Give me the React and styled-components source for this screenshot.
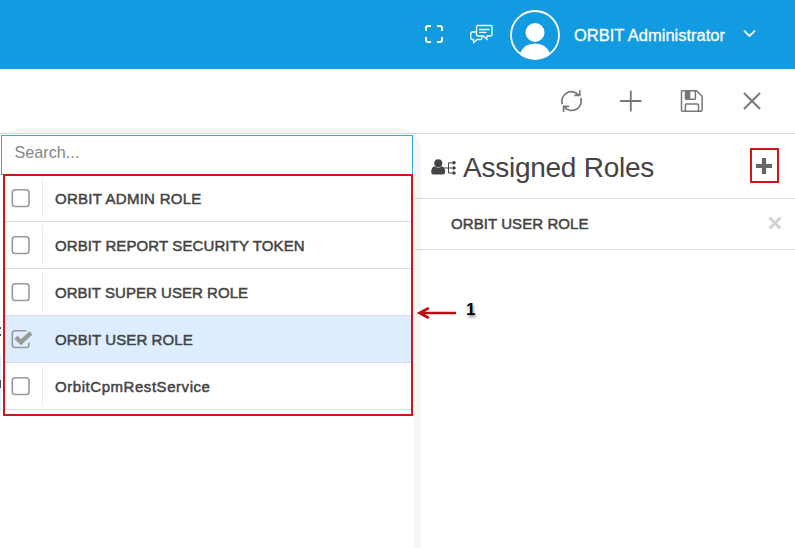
import React from "react";
import styled, { createGlobalStyle, css } from "styled-components";

const Global = createGlobalStyle`
  * { box-sizing: border-box; }
  html, body { margin: 0; padding: 0; background: #fff; overflow: hidden; }
  body { font-family: "Liberation Sans", Arial, sans-serif; color: #444; }
`;

const Page = styled.div`
  position: relative;
  width: 795px;
  height: 548px;
  display: flex;
  flex-direction: column;
  overflow: hidden;
  background: #fff;
`;
const TopBar = styled.header`
  flex: none;
  height: 69px;
  padding: 1px 39px 0 0;
  display: flex;
  justify-content: flex-end;
  align-items: center;
  background: #129be0;
  color: #fff;
`;
const UserName = styled.span`
  width: 151px;
  margin: 0 18px 0 14px;
  font-size: 16.5px;
  line-height: 20px;
  white-space: nowrap;
  -webkit-text-stroke: 0.3px #fff;
`;
const Icon = styled.svg`
  flex: none;
  display: block;
  overflow: visible;
  margin-right: ${(p) => p.$gap || 0}px;
`;
const Toolbar = styled.nav`
  position: relative;
  flex: none;
  height: 65px;
  padding: 0 32px 1px 0;
  display: flex;
  justify-content: flex-end;
  align-items: center;
  border-bottom: 1px solid #dadae2;
`;
const Halo = styled.div`
  position: absolute;
  left: 0;
  top: 128px;
  width: 421px;
  height: 440px;
  border-radius: 22px;
  background: #f6f6f6;
`;
const Body = styled.main`
  position: relative;
  flex: 1;
  display: flex;
  border-top: 1px solid #dadae2;
  margin-top: -1px;
`;
const Sliver = styled.div`
  width: 1px;
  background: #fff;
  padding-top: 193px;
  overflow: hidden;
`;
const Mark = styled.i`
  display: block;
  height: ${(p) => p.$h}px;
  margin-bottom: ${(p) => p.$gap}px;
  background: ${(p) => p.$color};
`;
const Available = styled.section`
  width: 413px;
  display: flex;
  flex-direction: column;
  padding-top: 1px;
  background: #fff;
`;
const Search = styled.input`
  width: 412px;
  height: 40px;
  border: 1px solid #38a9e0;
  border-radius: 0;
  outline: 0;
  padding: 0 12.5px 5px;
  font: 16.2px/20px "Liberation Sans", Arial, sans-serif;
  color: #777;
  background: #fff;
  &::placeholder { color: #858585; opacity: 1; }
`;
const RoleRow = styled.div`
  height: 47px;
  width: 408px;
  margin-left: 3px;
  display: flex;
  align-items: center;
  border-bottom: 1px solid #dadce2;
  background: ${(p) => (p.$selected ? "#dceeff" : "#fff")};
`;
const CheckCell = styled.div`
  width: 39px;
  height: 40px;
  padding-left: 6px;
  display: flex;
  align-items: center;
  border-right: 1px solid #e9e9eb;
`;
const RoleName = styled.span`
  font-size: 15px;
  line-height: 20px;
  white-space: nowrap;
  color: #444;
  -webkit-text-stroke: 0.5px #444;
  letter-spacing: ${(p) => p.$spacing || 0}px;
  margin: 1px 0 0 12px;
`;
const Assigned = styled.section`
  flex: 1;
`;
const PanelHeader = styled.div`
  height: 65px;
  padding: 2px 23px 0 17px;
  display: flex;
  align-items: center;
  border-bottom: 1px solid #dadae2;
`;
const Title = styled.h1`
  flex: 1;
  margin: 2px 0 0;
  font-size: 28px;
  line-height: 34px;
  font-weight: 400;
  letter-spacing: -0.25px;
  color: #444;
`;
const AddIcon = styled(Icon)`
  margin-top: -3px;
`;
const AssignedRow = styled.div`
  height: 51px;
  padding: 0 13px 2px 25px;
  display: flex;
  align-items: center;
  justify-content: space-between;
  border-bottom: 1px solid #dcdcdf;
`;
const outline = css`
  position: absolute;
  border: 2px solid #d3151b;
  pointer-events: none;
`;
const ListOutline = styled.div`
  ${outline}
  left: 3px; top: 174px; width: 410px; height: 242px;
`;
const AddOutline = styled.div`
  ${outline}
  left: 750px; top: 148px; width: 29px; height: 35px;
`;
const Callout = styled.div`
  position: absolute;
  left: 417px;
  top: 302px;
  display: flex;
  align-items: center;
  height: 20px;
`;
const Step = styled.b`
  margin: -4px 0 0 9px;
  font-size: 17px;
  color: #000;
  text-shadow: 1px 2px 3px rgba(0, 0, 0, 0.5);
`;

const roles = [
  ["ORBIT ADMIN ROLE", 0.27],
  ["ORBIT REPORT SECURITY TOKEN", 0.11],
  ["ORBIT SUPER USER ROLE", 0.04],
  ["ORBIT USER ROLE", 0.09, true],
  ["OrbitCpmRestService", 0.55],
];

const Checkbox = ({ checked }) => (
  <Icon width="24" height="20" fill="none" stroke="#999" strokeWidth="1.6">
    {checked ? (
      <>
        <path d="M16.5 1.8H5.1Q2.3 1.8 2.3 4.6V15.7Q2.3 18.5 5.1 18.5H16.2Q19 18.5 19 15.7V13.5" />
        <path d="M6 8.2L11 13.2L21 3.8" strokeWidth="4.4" />
      </>
    ) : (
      <rect x="2.3" y="1.8" width="16.7" height="16.7" rx="2.8" />
    )}
  </Icon>
);

export default function App() {
  return (
    <Page>
      <Global />
      <TopBar>
        <Icon $gap={27} width="18" height="18" fill="none" stroke="#fff" strokeWidth="2" viewBox="0 1 18 18">
          <path d="M1 6V3Q1 1 3 1H6M12 1H15Q17 1 17 3V6M17 12V15Q17 17 15 17H12M6 17H3Q1 17 1 15V12" />
        </Icon>
        <Icon $gap={17} width="23" height="19" viewBox="0 1.5 23 19" fill="none" stroke="#fff" strokeWidth="1.3" strokeLinejoin="round">
          <path d="M8 1H20.5Q22 1 22 2.5V10Q22 11.5 20.5 11.5H17V15L13.5 11.5H8Q6.5 11.5 6.5 10V2.5Q6.5 1 8 1Z" />
          <path d="M9.2 5H19.5M9.2 7.8H16.5" />
          <path d="M6.5 7.5H2.3Q.8 7.5.8 9V13.5Q.8 15 2.3 15H3.5V18.2L7 15H11Q12 15 12 13.5V12" />
        </Icon>
        <Icon width="50" height="50" viewBox="0 0 50 50">
          <defs><clipPath id="avatar"><circle cx="25" cy="25" r="24" /></clipPath></defs>
          <g fill="#fff" clipPath="url(#avatar)">
            <circle cx="25" cy="22.4" r="9.5" />
            <path d="M9.5 50V44Q14 33.6 25 33.6T40.5 44V50Z" />
          </g>
          <circle cx="25" cy="25" r="24" fill="none" stroke="#fff" strokeWidth="1.8" />
        </Icon>
        <UserName>ORBIT Administrator</UserName>
        <Icon width="13" height="8" viewBox="0 1.5 13 8" fill="none" stroke="#fff" strokeWidth="1.8">
          <path d="M1 1.2L6.5 6.5L12 1.2" />
        </Icon>
      </TopBar>

      <Halo />
      <Toolbar>
        <Icon $gap={37} width="22" height="22" viewBox="-1 0 22 22" fill="none" stroke="#777" strokeWidth="1.7">
          <path d="M1.3 14.2A9.5 9.5 0 0 1 17.6 5.1M18.8 .2V5.4H13.3" />
          <path d="M19.7 7.8A9.5 9.5 0 0 1 3.4 17M2.6 22V16.4H8.1" />
        </Icon>
        <Icon $gap={39} width="22" height="22" viewBox="-.8 0 22 22" fill="none" stroke="#777" strokeWidth="1.8">
          <path d="M11 .5V21.5M.3 11H21.7" />
        </Icon>
        <Icon $gap={39} width="22" height="22" viewBox="-.8 0 22 22" fill="none" stroke="#777" strokeWidth="1.5">
          <path d="M1.7 .8H15.8L21.3 6.3V20.3Q21.3 21.3 20.3 21.3H1.7Q.7 21.3.7 20.3V1.8Q.7.8 1.7.8Z" />
          <path d="M4.7 1V8.4Q4.7 9.3 5.7 9.3H13.6Q14.6 9.3 14.6 8.4V1M4.6 21V15Q4.6 14 5.6 14H16.7Q17.7 14 17.7 15V21" />
          <path d="M4.7 1H9.5V9.2H4.7Z" fill="#777" stroke="none" />
        </Icon>
        <Icon width="22" height="22" viewBox="0 0 22 22" fill="none" stroke="#777" strokeWidth="2">
          <path d="M3 3L19 19M19 3L3 19" />
        </Icon>
      </Toolbar>

      <Body>
        <Sliver>
          <Mark $h={2} $gap={5} $color="#444" />
          <Mark $h={2} $gap={19} $color="#444" />
          <Mark $h={25} $gap={0} $color="#dceeff" />
          <Mark $h={8} $gap={0} $color="#555" />
          <Mark $h={23} $gap={0} $color="#dceeff" />
        </Sliver>
        <Available>
          <Search placeholder="Search..." aria-label="Search" />
          {roles.map(([name, spacing, checked]) => (
            <RoleRow key={name} $selected={checked}>
              <CheckCell><Checkbox checked={checked} /></CheckCell>
              <RoleName $spacing={spacing}>{name}</RoleName>
            </RoleRow>
          ))}
        </Available>
        <Assigned>
          <PanelHeader>
            <Icon $gap={7} width="25" height="17" viewBox="0 0 25 17" fill="#444">
              <circle cx="7.3" cy="4.3" r="4" />
              <path d="M3.5 7.3Q7.3 10 11 7.3Q14.2 8.5 14.2 13Q14 15.5 11.8 15.5H2.5Q.2 15.5.2 13Q.2 8.5 3.5 7.3Z" />
              <path d="M13 9H22M22 3.8H17.5V14H22" fill="none" stroke="#444" />
              <circle cx="23" cy="3.8" r="1.7" /><circle cx="23" cy="9" r="1.7" /><circle cx="23" cy="14" r="1.7" />
            </Icon>
            <Title>Assigned Roles</Title>
            <AddIcon width="16" height="16" fill="none" stroke="#666" strokeWidth="4.2" strokeLinecap="butt">
              <path d="M8 0V16M0 8H16" />
            </AddIcon>
          </PanelHeader>
          <AssignedRow>
            <RoleName $spacing={0.08}>ORBIT USER ROLE</RoleName>
            <Icon width="14" height="14" viewBox="0 0 14 14" fill="none" stroke="#d3d3d3" strokeWidth="3">
              <path d="M1.5 1.5L12.5 12.5M12.5 1.5L1.5 12.5" />
            </Icon>
          </AssignedRow>
        </Assigned>
      </Body>
      <ListOutline />
      <AddOutline />
      <Callout>
        <Icon width="40" height="13" viewBox="0 0 40 13" fill="none" stroke="#b90f13" strokeWidth="2.6" strokeLinecap="round">
          <path d="M3 7H38M11 2.5L2.5 7L11 11.5" />
        </Icon>
        <Step>1</Step>
      </Callout>
    </Page>
  );
}
